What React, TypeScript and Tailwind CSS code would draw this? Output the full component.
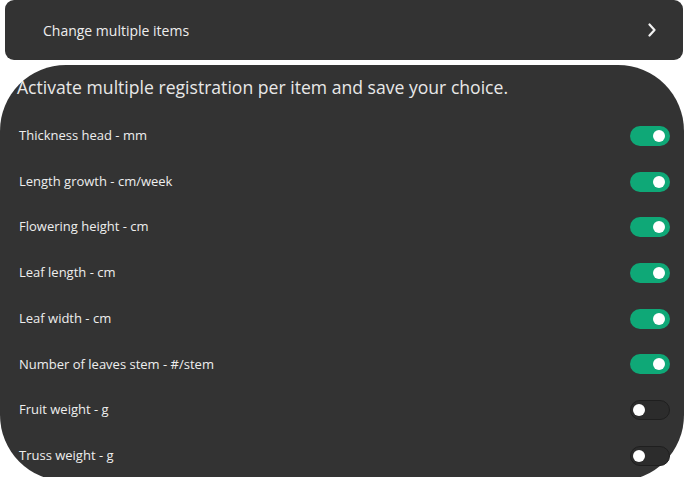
import React, { useState } from 'react'

const items = [
  { label: "Thickness head - mm", on: true },
  { label: "Length growth - cm/week", on: true },
  { label: "Flowering height - cm", on: true },
  { label: "Leaf length - cm", on: true },
  { label: "Leaf width - cm", on: true },
  { label: "Number of leaves stem - #/stem", on: true },
  { label: "Fruit weight - g", on: false },
  { label: "Truss weight - g", on: false },
]

const Toggle = ({ on, onClick }: { on: boolean; onClick: () => void }) => {
  return (
    <button
      onClick={onClick}
      className={
        on
          ? "w-[40px] h-[20px] rounded-full bg-[#0fa877] flex items-center justify-end px-[5px]"
          : "w-[40px] h-[20px] rounded-full bg-[#2c2c2c] border border-[#1f1f1f] flex items-center justify-start px-[2px]"
      }
    >
      <span className="block w-[12px] h-[12px] rounded-full bg-white" />
    </button>
  )
}

const App = () => {
  const [list, setList] = useState(items)
  const flip = (i: number) => {
    setList(list.map((it, j) => (j === i ? { ...it, on: !it.on } : it)))
  }
  return (
    <div className="w-[684px] h-[477px] bg-white overflow-hidden font-['Open_Sans',sans-serif] text-[#eeeeee]">
      <div className="ml-[5px] mr-[1px] h-[60px] rounded-[9px] bg-[#333333] flex items-center justify-between pl-[38px] pr-[26px]">
        <span className="text-[14px]">Change multiple items</span>
        <svg width="10" height="14" viewBox="0 0 10 14" fill="none">
          <path d="M2.5 1.5 L7.5 7 L2.5 12.5" stroke="#f2f2f2" strokeWidth="2.2" strokeLinecap="round" strokeLinejoin="round" />
        </svg>
      </div>
      <div className="mt-[5px] h-[416px] rounded-[66px] bg-[#333333] pt-[10px] pl-[17px] pr-[14px]">
        <p className="text-[17.6px] leading-[24px] text-[#e8e8e8]">
          Activate multiple registration per item and save your choice.
        </p>
        <div className="mt-[14px] pl-[2px]">
          {list.map((it, i) => (
            <div key={it.label} className="h-[45.7px] flex items-center justify-between">
              <span className="text-[13px]">{it.label}</span>
              <Toggle on={it.on} onClick={() => flip(i)} />
            </div>
          ))}
        </div>
      </div>
    </div>
  )
}

export default App
